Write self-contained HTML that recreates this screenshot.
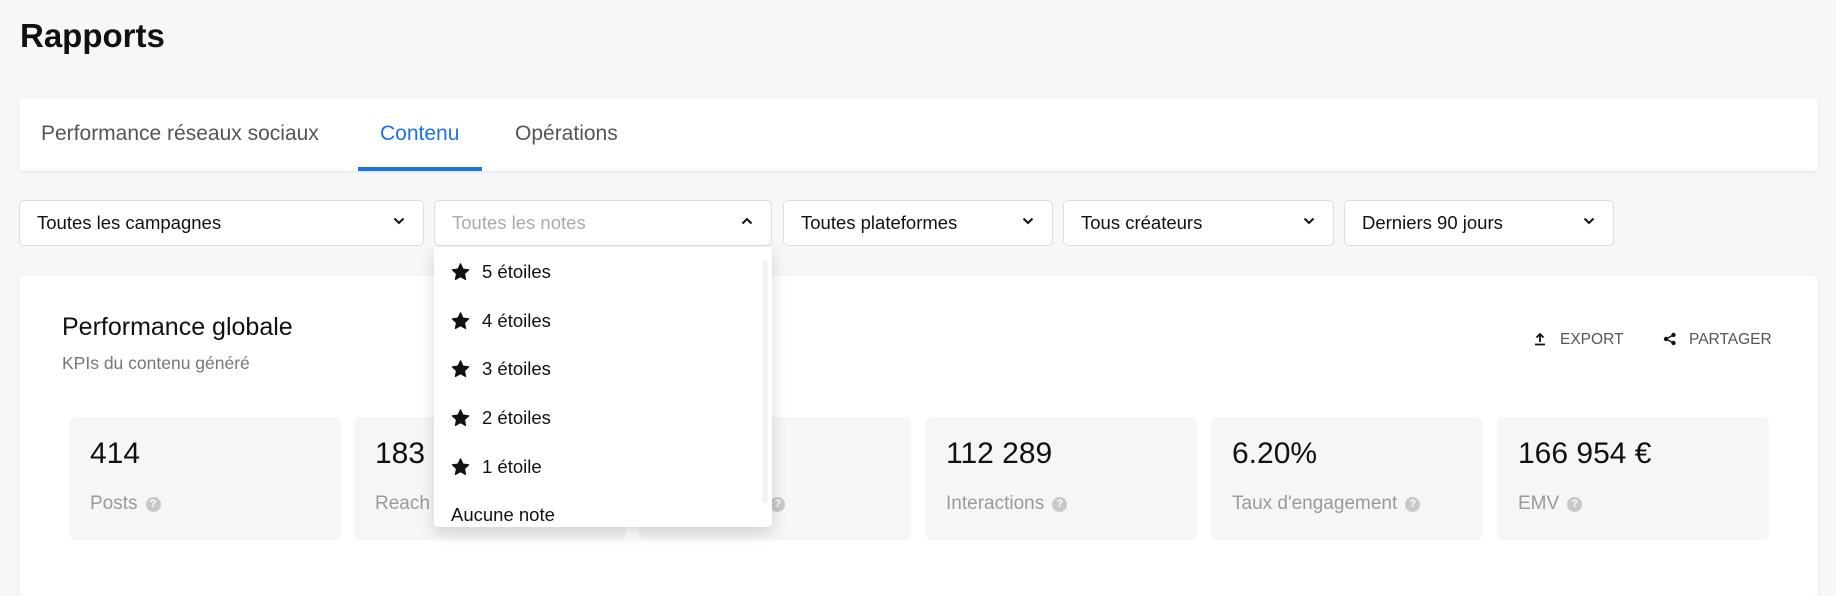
<!DOCTYPE html>
<html><head><meta charset="utf-8"><style>
*{box-sizing:border-box;margin:0;padding:0}
body{width:1836px;height:576px;background:#f7f7f7;font-family:"Liberation Sans",Arial,sans-serif;position:relative;overflow:hidden;color:#111}
.abs{position:absolute}
h1{position:absolute;left:20px;top:17px;font-size:33px;font-weight:bold;color:#111}
.card{position:absolute;left:19px;width:1799px;background:#fff;border-radius:4px;box-shadow:0 1px 3px rgba(0,0,0,.08)}
.tab{position:absolute;top:122px;font-size:21px;color:#555}
.sel{position:absolute;top:200px;height:46px;background:#fff;border:1px solid #ddd;border-radius:5px;font-size:18.5px;padding:0 0 0 17px;line-height:44px;color:#111}
.sel svg{position:absolute;right:18px;top:16px}
.kpi{position:absolute;top:417px;width:272px;height:123px;background:#f6f6f6;border-radius:6px}
.kpi .v{position:absolute;left:21px;top:20px;font-size:30px;color:#111}
.kpi .l{position:absolute;left:21px;top:76px;font-size:19px;color:#9a9a9a}
.q{display:inline-block;width:15px;height:15px;border-radius:50%;background:#c8c8c8;color:#fff;font-size:11px;line-height:15px;text-align:center;font-weight:bold;vertical-align:2px;margin-left:8px}
.dd{position:absolute;left:434px;top:247px;width:338px;height:280px;background:#fff;border-radius:0 0 4px 4px;box-shadow:0 6px 16px rgba(0,0,0,.15);overflow:hidden}
.it{position:absolute;left:17px;font-size:18.5px;color:#111}
.it svg{vertical-align:-3px;margin-right:12px}
</style></head><body>
<h1>Rapports</h1>
<div class="card" style="top:98px;height:73px"></div>
<div class="tab" style="left:41px">Performance réseaux sociaux</div>
<div class="tab" style="left:380px;color:#1a73e8">Contenu</div>
<div class="tab" style="left:515px">Opérations</div>
<div class="abs" style="left:358px;top:167px;width:124px;height:4px;background:#1a73e8"></div>

<div class="sel" style="left:19px;width:405px">Toutes les campagnes<svg width="12" height="8" viewBox="0 0 12 8"><path d="M1.5 1.5l4.5 4.5 4.5-4.5" fill="none" stroke="#111" stroke-width="2"/></svg></div>
<div class="sel" style="left:434px;width:338px;color:#aaa">Toutes les notes<svg width="12" height="8" viewBox="0 0 12 8"><path d="M1.5 6.5l4.5-4.5 4.5 4.5" fill="none" stroke="#111" stroke-width="2"/></svg></div>
<div class="sel" style="left:783px;width:270px">Toutes plateformes<svg width="12" height="8" viewBox="0 0 12 8"><path d="M1.5 1.5l4.5 4.5 4.5-4.5" fill="none" stroke="#111" stroke-width="2"/></svg></div>
<div class="sel" style="left:1063px;width:271px">Tous créateurs<svg width="12" height="8" viewBox="0 0 12 8"><path d="M1.5 1.5l4.5 4.5 4.5-4.5" fill="none" stroke="#111" stroke-width="2"/></svg></div>
<div class="sel" style="left:1344px;width:270px">Derniers 90 jours<svg width="12" height="8" viewBox="0 0 12 8"><path d="M1.5 1.5l4.5 4.5 4.5-4.5" fill="none" stroke="#111" stroke-width="2"/></svg></div>

<div class="card" style="top:276px;height:320px"></div>
<div class="abs" style="left:62px;top:313px;font-size:25px;color:#111">Performance globale</div>
<div class="abs" style="left:62px;top:353px;font-size:17.5px;color:#777">KPIs du contenu généré</div>
<div class="abs" style="left:1534px;top:331px;font-size:15.5px;color:#555"><svg width="12" height="14" viewBox="0 0 12 14" style="vertical-align:-2px;margin-right:14px"><path d="M6 10V2M2.5 5.5L6 2l3.5 3.5M1 12.5h10" fill="none" stroke="#111" stroke-width="1.8"/></svg>EXPORT</div>
<div class="abs" style="left:1663px;top:331px;font-size:15.5px;color:#555"><svg width="14" height="14" viewBox="0 0 14 14" style="vertical-align:-2px;margin-right:12px"><circle cx="3" cy="7" r="2.2" fill="#111"/><circle cx="10.5" cy="3" r="2.2" fill="#111"/><circle cx="10.5" cy="11" r="2.2" fill="#111"/><path d="M3 7l7.5-4M3 7l7.5 4" stroke="#111" stroke-width="1.4"/></svg>PARTAGER</div>

<div class="kpi" style="left:69px"><div class="v">414</div><div class="l">Posts<span class="q">?</span></div></div>
<div class="kpi" style="left:354px"><div class="v">183 4</div><div class="l">Reach<span class="q">?</span></div></div>
<div class="kpi" style="left:639px"><div class="v">2 1</div><div class="l">Impressions<span class="q">?</span></div></div>
<div class="kpi" style="left:925px"><div class="v">112 289</div><div class="l">Interactions<span class="q">?</span></div></div>
<div class="kpi" style="left:1211px"><div class="v">6.20%</div><div class="l">Taux d'engagement<span class="q">?</span></div></div>
<div class="kpi" style="left:1497px"><div class="v">166 954 €</div><div class="l">EMV<span class="q">?</span></div></div>

<div class="dd">
<div class="abs" style="left:328px;top:13px;width:6px;height:243px;background:#f3f3f3;border-radius:3px"></div>
<div class="it" style="top:14px"><svg width="19" height="18" viewBox="0 0 24 23"><path d="M12 1l3.2 6.8 7.3.9-5.4 5 1.4 7.3L12 17.4 5.5 21l1.4-7.3-5.4-5 7.3-.9z" fill="#111" stroke="#111" stroke-width="1.5" stroke-linejoin="round"/></svg>5 étoiles</div>
<div class="it" style="top:63px"><svg width="19" height="18" viewBox="0 0 24 23"><path d="M12 1l3.2 6.8 7.3.9-5.4 5 1.4 7.3L12 17.4 5.5 21l1.4-7.3-5.4-5 7.3-.9z" fill="#111" stroke="#111" stroke-width="1.5" stroke-linejoin="round"/></svg>4 étoiles</div>
<div class="it" style="top:111px"><svg width="19" height="18" viewBox="0 0 24 23"><path d="M12 1l3.2 6.8 7.3.9-5.4 5 1.4 7.3L12 17.4 5.5 21l1.4-7.3-5.4-5 7.3-.9z" fill="#111" stroke="#111" stroke-width="1.5" stroke-linejoin="round"/></svg>3 étoiles</div>
<div class="it" style="top:160px"><svg width="19" height="18" viewBox="0 0 24 23"><path d="M12 1l3.2 6.8 7.3.9-5.4 5 1.4 7.3L12 17.4 5.5 21l1.4-7.3-5.4-5 7.3-.9z" fill="#111" stroke="#111" stroke-width="1.5" stroke-linejoin="round"/></svg>2 étoiles</div>
<div class="it" style="top:209px"><svg width="19" height="18" viewBox="0 0 24 23"><path d="M12 1l3.2 6.8 7.3.9-5.4 5 1.4 7.3L12 17.4 5.5 21l1.4-7.3-5.4-5 7.3-.9z" fill="#111" stroke="#111" stroke-width="1.5" stroke-linejoin="round"/></svg>1 étoile</div>
<div class="it" style="top:257px">Aucune note</div>
</div>
</body></html>
